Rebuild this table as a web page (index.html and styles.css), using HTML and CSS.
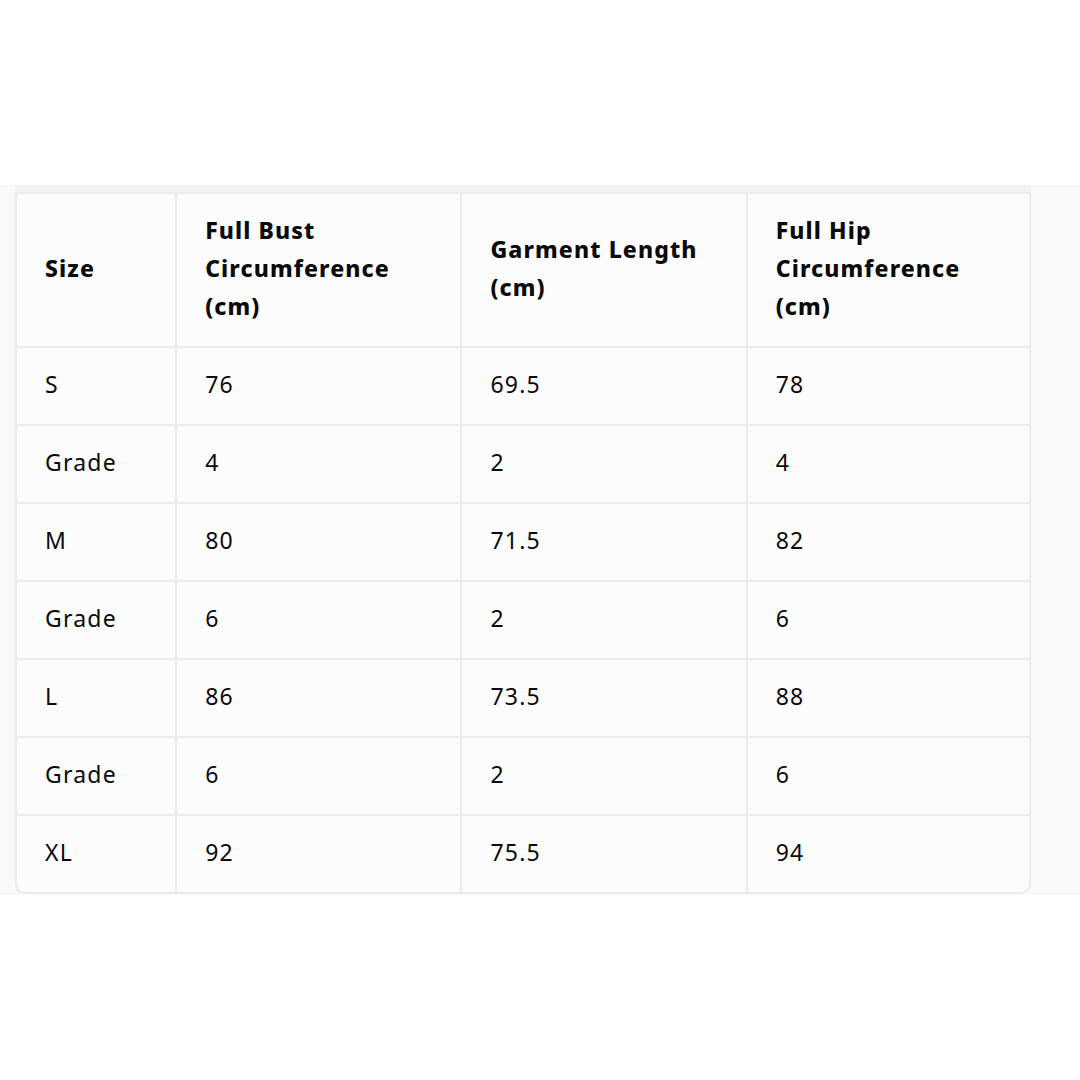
FILE: index.html
```html
<!DOCTYPE html>
<html>
<head>
<meta charset="utf-8">
<link rel="stylesheet" href="styles.css">
</head>
<body>
<div class="band">
  <div class="wrap">
    <table class="sizes">
      <thead>
        <tr>
          <th class="c1">Size</th>
          <th class="c2">Full Bust<br>Circumference<br>(cm)</th>
          <th class="c3">Garment Length<br>(cm)</th>
          <th class="c4">Full Hip<br>Circumference<br>(cm)</th>
        </tr>
      </thead>
      <tbody>
        <tr><td>S</td><td>76</td><td>69.5</td><td>78</td></tr>
        <tr><td>Grade</td><td>4</td><td>2</td><td>4</td></tr>
        <tr><td>M</td><td>80</td><td>71.5</td><td>82</td></tr>
        <tr><td>Grade</td><td>6</td><td>2</td><td>6</td></tr>
        <tr><td>L</td><td>86</td><td>73.5</td><td>88</td></tr>
        <tr><td>Grade</td><td>6</td><td>2</td><td>6</td></tr>
        <tr><td>XL</td><td>92</td><td>75.5</td><td>94</td></tr>
      </tbody>
    </table>
  </div>
</div>
</body>
</html>
```
FILE: styles.css
```css
html, body {
  margin: 0;
  padding: 0;
  background: #ffffff;
}
body {
  font-family: "Noto Sans", "Open Sans", sans-serif;
  color: #0a0a0a;
}
.band {
  margin-top: 185px;
  height: 710px;
  background: #f9f9f9;
}
.wrap {
  width: 1016px;
  margin-left: 15px;
  padding-top: 7px;
  background: linear-gradient(#f1f2f3 0 7px, transparent 7px);
}
.sizes {
  width: 1016px;
  border-collapse: separate;
  border-spacing: 0;
  background: #fcfcfc;
  border: 2px solid #ebebeb;
  border-radius: 0 0 10px 10px;
  table-layout: fixed;
}
.sizes th, .sizes td {
  text-align: left;
  vertical-align: middle;
  padding: 17px 28px 21px;
  font-size: 23px;
  line-height: 38px;
  border-right: 2px solid #ebebeb;
  border-bottom: 2px solid #ebebeb;
}
.sizes th {
  font-weight: 800;
  letter-spacing: 1.1px;
}
.sizes td {
  font-weight: 400;
  letter-spacing: 1.2px;
}
.sizes tr > :last-child {
  border-right: none;
}
.sizes tbody tr:last-child td {
  border-bottom: none;
}
.c1 { width: 102px; }
.c2 { width: 227px; }
.c3 { width: 227px; }
.c4 { width: 225px; }
```
